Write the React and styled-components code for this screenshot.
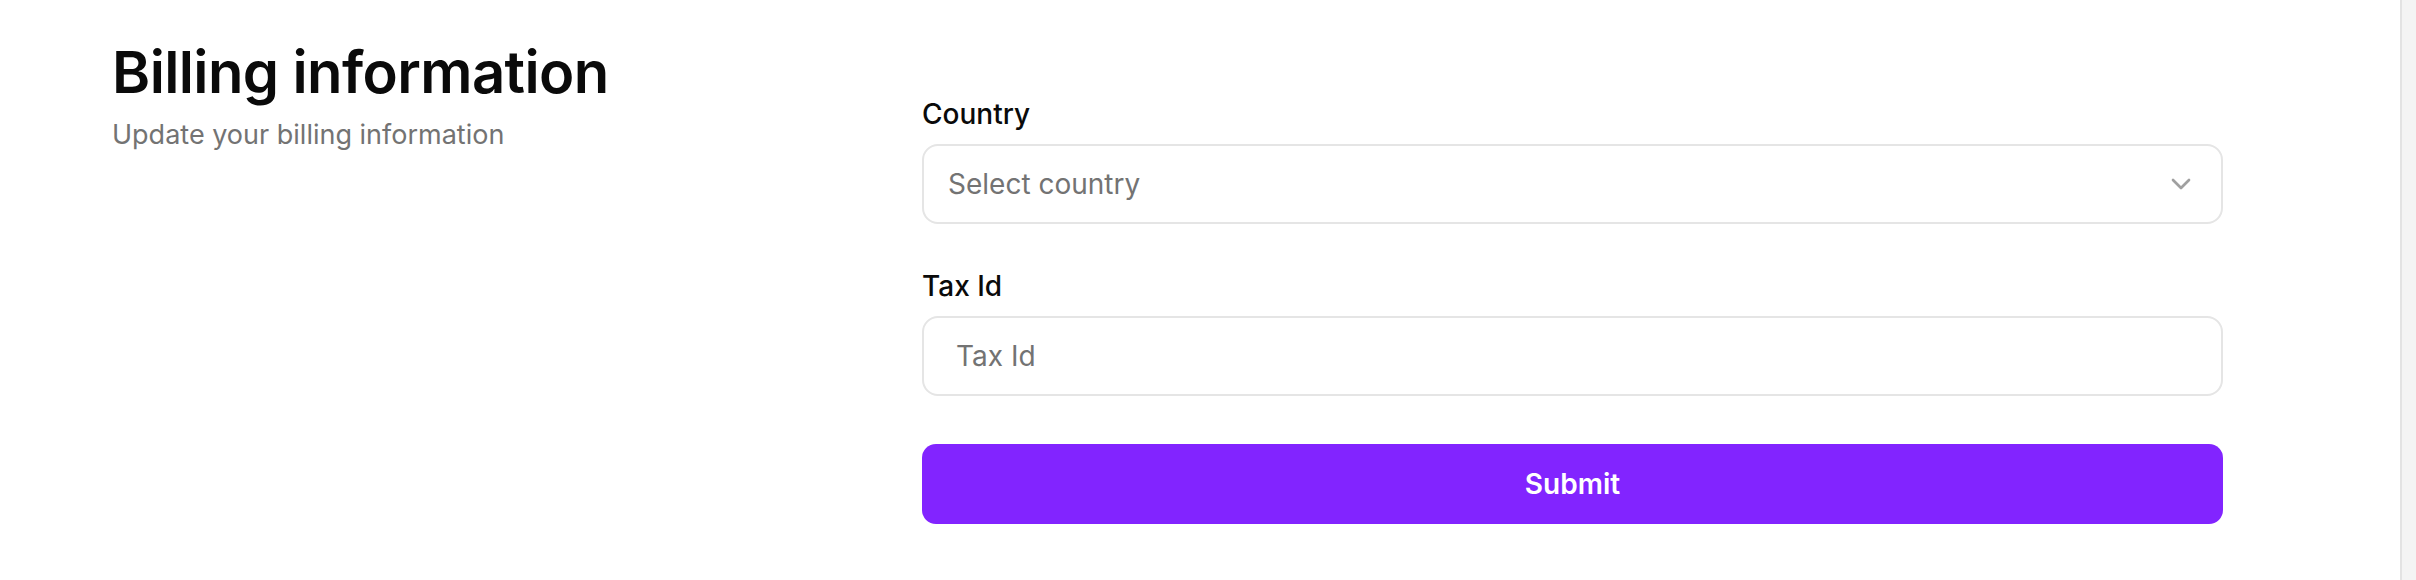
import React from 'react'
import styled, {createGlobalStyle} from 'styled-components'

const GlobalStyle = createGlobalStyle`
  html, body {
    margin: 0;
    padding: 0;
    background: #ffffff;
    font-family: Inter, "Liberation Sans", sans-serif;
  }
  * {
    box-sizing: border-box;
  }
`;

const Window = styled.div`
  display: flex;
  width: 100%;
  height: 100vh;
  overflow: hidden;
`;

const Page = styled.main`
  flex: 1;
  display: flex;
  padding-left: 112px;
`;

const Intro = styled.section`
  width: 810px;
  padding-top: 43px;
`;

const Title = styled.h1`
  margin: 0;
  font-size: 58px;
  line-height: 58px;
  font-weight: 600;
  letter-spacing: -0.6px;
  color: #0a0a0a;
`;

const Subtitle = styled.p`
  margin: 16px 0 0;
  font-size: 27px;
  line-height: 36px;
  color: #737373;
`;

const Form = styled.form`
  width: 1301px;
  padding-top: 100px;
  display: flex;
  flex-direction: column;
`;

const Field = styled.div`
  display: flex;
  flex-direction: column;
  gap: 16px;
  margin-bottom: 48px;
`;

const Label = styled.label`
  font-size: 28px;
  line-height: 28px;
  font-weight: 500;
  color: #0a0a0a;
`;

const SelectBox = styled.button`
  display: flex;
  align-items: center;
  justify-content: space-between;
  height: 80px;
  padding: 0 24px;
  border: 2px solid #e5e5e5;
  border-radius: 16px;
  background: #ffffff;
  font-family: inherit;
  font-size: 28px;
  color: #737373;
  text-align: left;
  svg {
    opacity: 0.5;
  }
`;

const Input = styled.input`
  height: 80px;
  padding: 0 32px;
  border: 2px solid #e5e5e5;
  border-radius: 16px;
  background: #ffffff;
  font-family: inherit;
  font-size: 28px;
  color: #0a0a0a;
  outline: none;
  &::placeholder {
    color: #737373;
  }
`;

const Submit = styled.button`
  height: 80px;
  border: none;
  border-radius: 14px;
  background: #8224ff;
  color: #ffffff;
  font-family: inherit;
  font-size: 28px;
  font-weight: 600;
`;

const Scrollbar = styled.div`
  width: 16px;
  flex-shrink: 0;
  background: #f4f4f4;
  border-left: 2px solid #e3e3e3;
`;

const Chevron = () => (
    <svg width="32" height="32" viewBox="0 0 24 24" fill="none" stroke="#444" strokeWidth="2"
         strokeLinecap="round" strokeLinejoin="round">
        <path d="m6 9 6 6 6-6"/>
    </svg>
);

export default function App() {
    return (
        <Window>
            <GlobalStyle/>
            <Page>
                <Intro>
                    <Title>Billing information</Title>
                    <Subtitle>Update your billing information</Subtitle>
                </Intro>
                <Form onSubmit={e => e.preventDefault()}>
                    <Field>
                        <Label>Country</Label>
                        <SelectBox type="button">
                            <span>Select country</span>
                            <Chevron/>
                        </SelectBox>
                    </Field>
                    <Field>
                        <Label htmlFor="taxId">Tax Id</Label>
                        <Input id="taxId" placeholder="Tax Id"/>
                    </Field>
                    <Submit type="submit">Submit</Submit>
                </Form>
            </Page>
            <Scrollbar/>
        </Window>
    )
}
